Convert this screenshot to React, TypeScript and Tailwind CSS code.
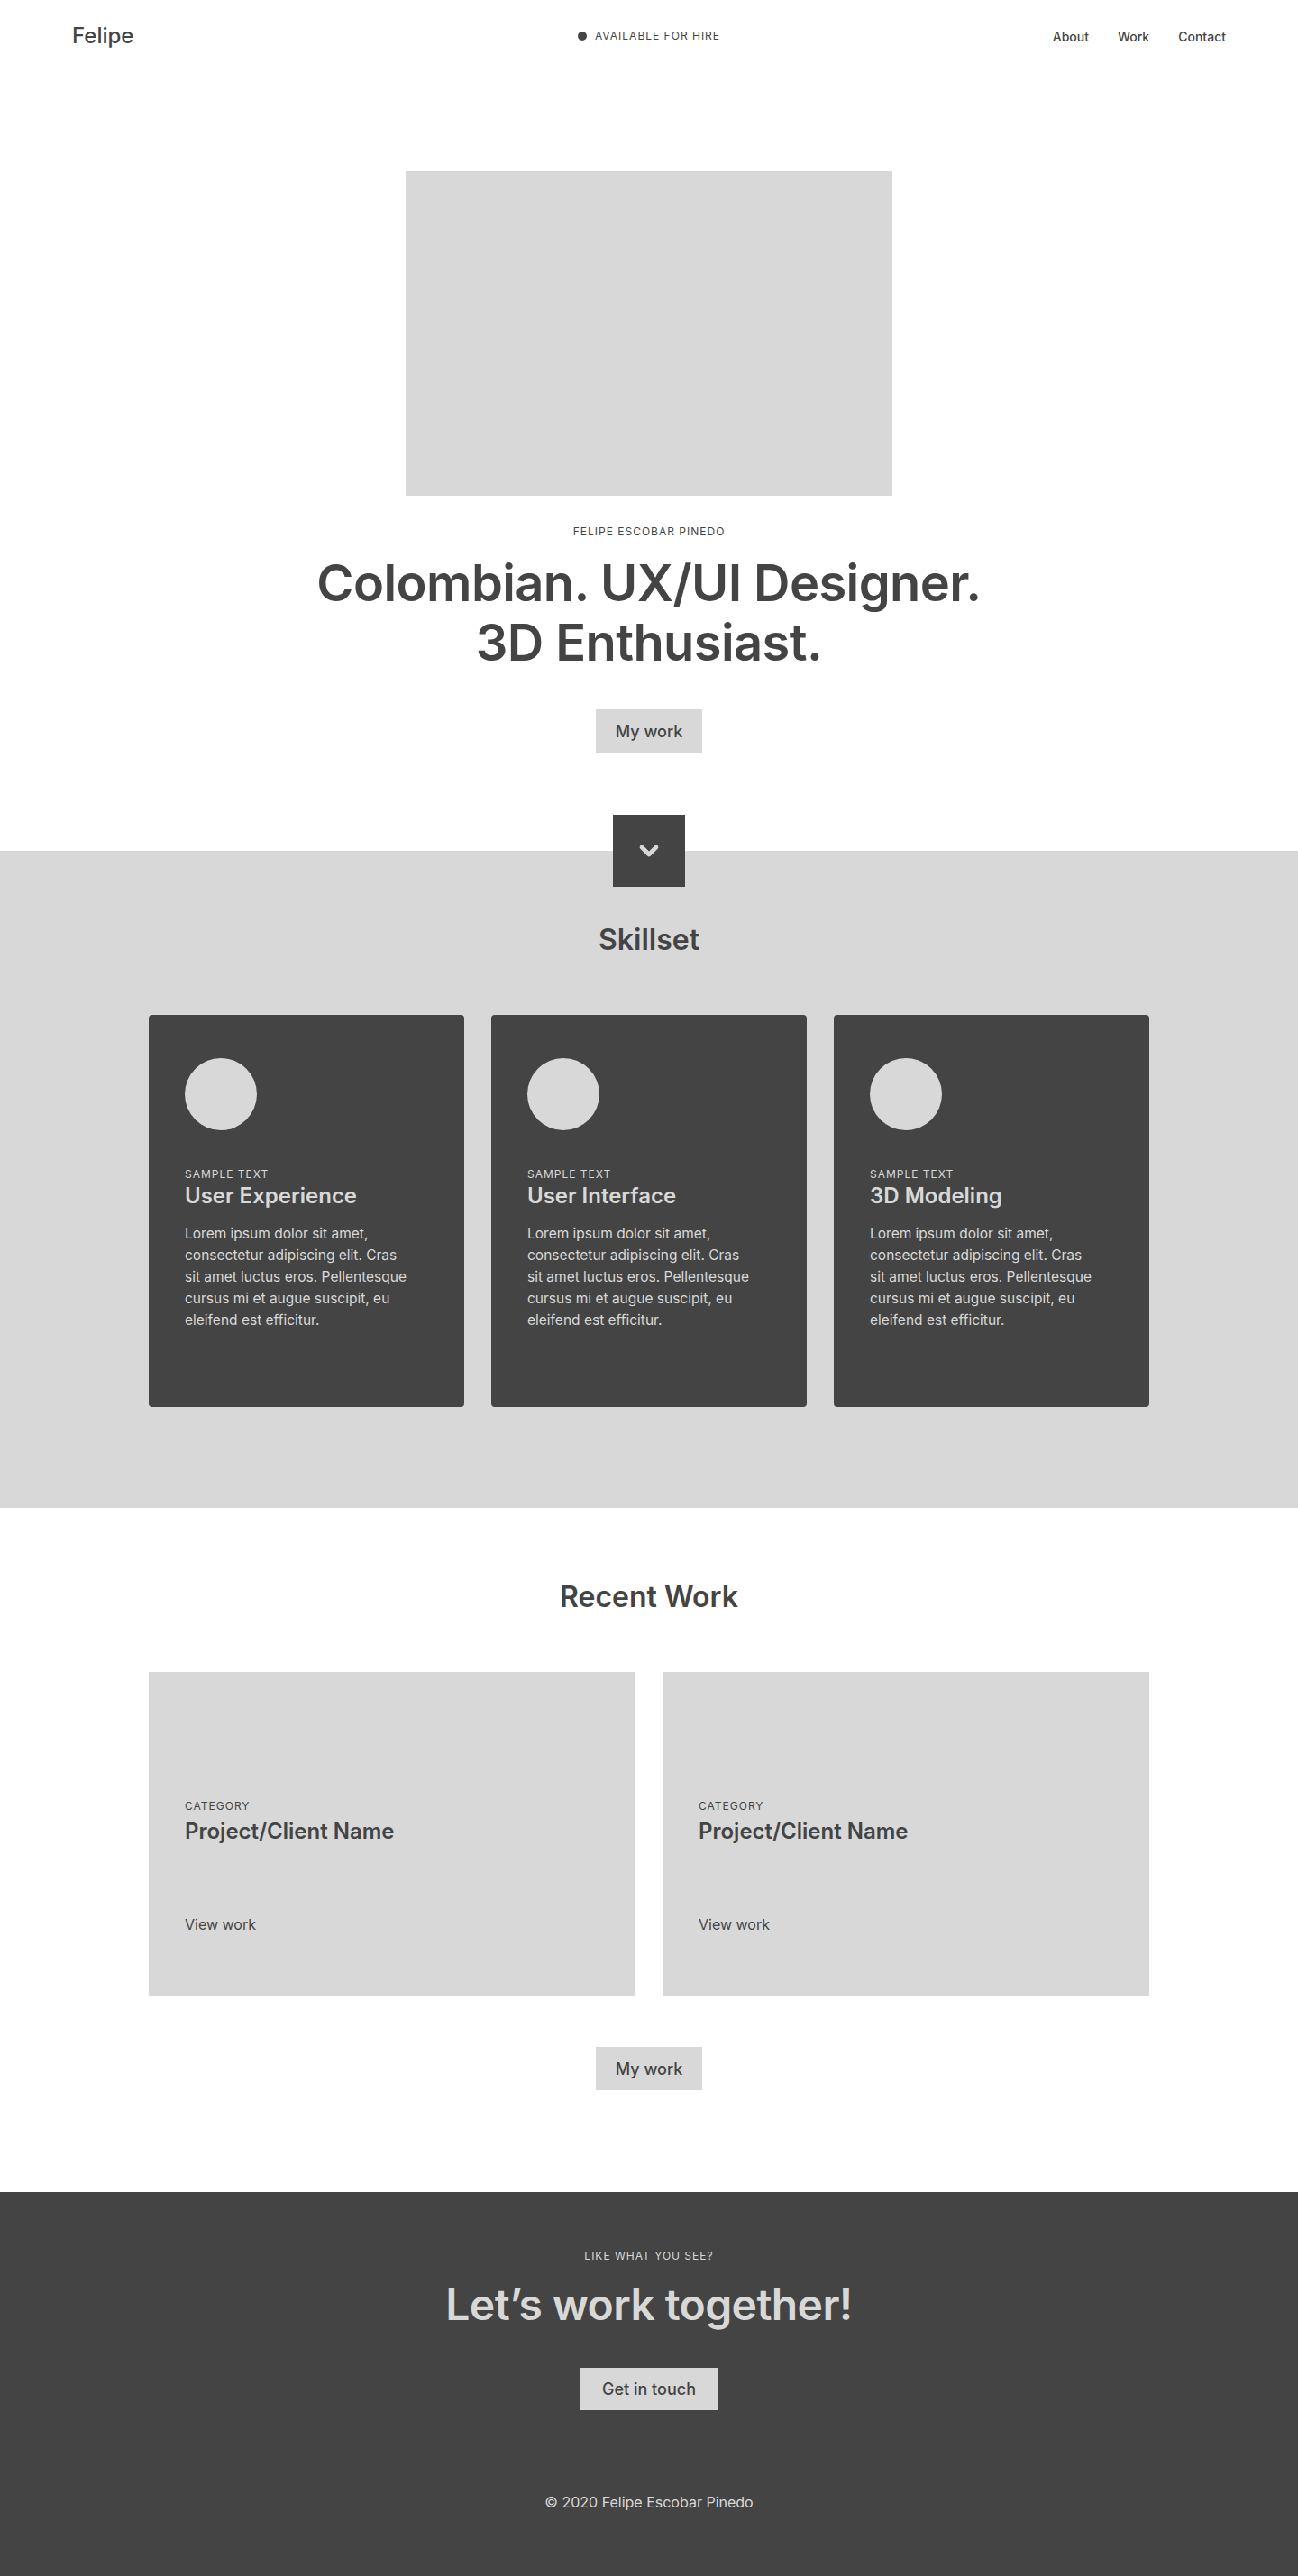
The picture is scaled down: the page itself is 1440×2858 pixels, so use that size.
import { ChevronDown } from "lucide-react";

const skills = [
  { id: 1, title: "User Experience" },
  { id: 2, title: "User Interface" },
  { id: 3, title: "3D Modeling" },
];

const projects = [1, 2];

// broken by hand so the wraps match the design
const loremLines = [
  "Lorem ipsum dolor sit amet,",
  "consectetur adipiscing elit. Cras",
  "sit amet luctus eros. Pellentesque",
  "cursus mi et augue suscipit, eu",
  "eleifend est efficitur.",
];

export default function App() {
  return (
    <div className="min-h-[2858px] bg-white text-[#444444] font-['Inter','Noto_Sans',sans-serif]">
      {/* nav */}
      <header className="grid h-[80px] grid-cols-3 items-center px-20">
        <a href="#" className="text-[24px] font-medium leading-none">
          Felipe
        </a>
        <div className="flex items-center justify-center gap-[9px]">
          <span className="h-[10px] w-[10px] rounded-full bg-[#444444]" />
          <span className="text-[12px] tracking-[1px] uppercase">Available for hire</span>
        </div>
        <nav className="flex items-center justify-end gap-8 text-[14px] font-medium">
          <a href="#">About</a>
          <a href="#">Work</a>
          <a href="#">Contact</a>
        </nav>
      </header>

      {/* hero */}
      <section className="flex flex-col items-center pt-[110px] pb-[109px]">
        <div className="h-[360px] w-[540px] bg-[#d8d8d8]" />
        <p className="mt-8 text-[12px] leading-4 tracking-[1px] uppercase">Felipe Escobar Pinedo</p>
        <h1 className="mt-4 text-center text-[56px] font-semibold leading-[66px] tracking-[-0.6px]">
          Colombian. UX/UI Designer.
          <br />
          3D Enthusiast.
        </h1>
        <button className="mt-[41px] h-12 w-[118px] bg-[#d8d8d8] text-[18px] font-medium">My work</button>
      </section>

      {/* skillset */}
      <section className="flex flex-col items-center bg-[#d8d8d8] pb-[112px]">
        <div className="-mt-10 flex h-20 w-20 items-center justify-center bg-[#444444]">
          <ChevronDown className="h-8 w-8 text-[#d8d8d8]" strokeWidth={3.5} />
        </div>
        <h2 className="mt-[39px] text-[32px] font-semibold leading-10">Skillset</h2>
        <div className="mt-[63px] grid w-[1110px] grid-cols-3 gap-[30px]">
          {skills.map((item) => (
            <div key={item.id} className="h-[435px] rounded bg-[#444444] px-10 pt-12 text-[#d8d8d8]">
              <div className="h-20 w-20 rounded-full bg-[#d8d8d8]" />
              <p className="mt-[41px] text-[12px] leading-4 tracking-[1px] uppercase">Sample text</p>
              <h3 className="text-[24px] font-semibold leading-8">{item.title}</h3>
              <p className="mt-[14px] text-[15.5px] leading-6 whitespace-nowrap">
                {loremLines.map((line) => (
                  <span key={line} className="block">
                    {line}
                  </span>
                ))}
              </p>
            </div>
          ))}
        </div>
      </section>

      {/* recent work */}
      <section className="flex flex-col items-center pt-[79px] pb-[113px]">
        <h2 className="text-[32px] font-semibold leading-10">Recent Work</h2>
        <div className="mt-[63px] grid w-[1110px] grid-cols-2 gap-[30px]">
          {projects.map((p) => (
            <div key={p} className="flex h-[360px] flex-col bg-[#d8d8d8] pl-10 pt-[141px]">
              <p className="text-[12px] leading-4 tracking-[1px] uppercase">Category</p>
              <h3 className="mt-1 text-[24px] font-semibold leading-8">Project/Client Name</h3>
              <a href="#" className="mt-[75px] text-[16px] leading-6">
                View work
              </a>
            </div>
          ))}
        </div>
        <button className="mt-14 h-12 w-[118px] bg-[#d8d8d8] text-[18px] font-medium">My work</button>
      </section>

      {/* contact */}
      <footer className="flex flex-col items-center bg-[#444444] pt-[63px] pb-[70px] text-[#d8d8d8]">
        <p className="text-[12px] leading-4 tracking-[1px] uppercase">Like what you see?</p>
        <h2 className="mt-[18px] text-[48px] font-semibold leading-[56px] tracking-[-0.6px]">Let’s work together!</h2>
        <button className="mt-[42px] h-[47px] w-[154px] bg-[#d8d8d8] text-[18px] font-medium text-[#444444]">
          Get in touch
        </button>
        <p className="mt-[90px] text-[16px] leading-6">© 2020 Felipe Escobar Pinedo</p>
      </footer>
    </div>
  );
}
